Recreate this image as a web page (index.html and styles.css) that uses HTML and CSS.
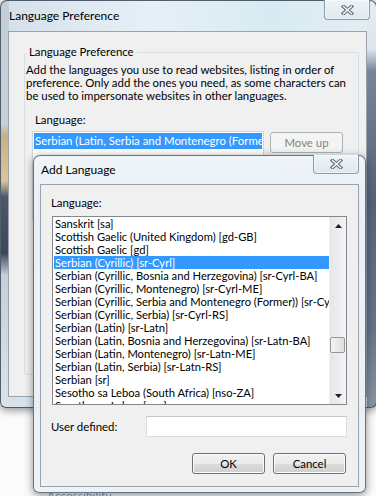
FILE: index.html
```html
<!DOCTYPE html>
<html lang="en">
<head>
  <meta charset="UTF-8">
  <title>Language Preference</title>
  <link rel="stylesheet" href="styles.css">
</head>
<body>
  <!-- link on the page behind the dialogs -->
  <a class="backdrop-link" href="#">Accessibility</a>

  <!-- Language Preference window -->
  <div class="window main-window">
    <div class="titlebar">
      <span class="title">Language Preference</span>
      <button class="close-btn" type="button">
        <svg width="13" height="10" viewBox="0 0 13 10">
          <path d="M2.5 1.5 L10.5 8.5 M10.5 1.5 L2.5 8.5" stroke="#5f656e" stroke-width="3.6" stroke-linecap="square"/>
          <path d="M2.5 1.5 L10.5 8.5 M10.5 1.5 L2.5 8.5" stroke="#f3f6f9" stroke-width="1.6" stroke-linecap="square"/>
        </svg>
      </button>
    </div>
    <div class="client">
      <fieldset class="group">
        <legend>Language Preference</legend>
        <p class="desc">Add the languages you use to read websites, listing in order of<br>preference. Only add the ones you need, as some characters can<br>be used to impersonate websites in other languages.</p>
        <div class="field-label">Language:</div>
        <div class="lang-row">
          <div class="pref-list">
            <div class="pref-item selected">Serbian (Latin, Serbia and Montenegro (Former)) [sr-Latn-CS]</div>
          </div>
          <div class="side-buttons">
            <button class="btn" type="button" disabled>Move up</button>
            <button class="btn" type="button" disabled>Move down</button>
          </div>
        </div>
      </fieldset>
    </div>
  </div>

  <!-- Add Language window -->
  <div class="window add-window">
    <div class="titlebar">
      <span class="title">Add Language</span>
      <button class="close-btn" type="button">
        <svg width="13" height="10" viewBox="0 0 13 10">
          <path d="M2.5 1.5 L10.5 8.5 M10.5 1.5 L2.5 8.5" stroke="#5f656e" stroke-width="3.6" stroke-linecap="square"/>
          <path d="M2.5 1.5 L10.5 8.5 M10.5 1.5 L2.5 8.5" stroke="#f3f6f9" stroke-width="1.6" stroke-linecap="square"/>
        </svg>
      </button>
    </div>
    <div class="client">
      <div class="field-label add-label">Language:</div>
      <div class="listbox">
        <div class="items">
          <div class="item">Sanskrit [sa]</div>
          <div class="item">Scottish Gaelic (United Kingdom) [gd-GB]</div>
          <div class="item">Scottish Gaelic [gd]</div>
          <div class="item selected">Serbian (Cyrillic) [sr-Cyrl]</div>
          <div class="item">Serbian (Cyrillic, Bosnia and Herzegovina) [sr-Cyrl-BA]</div>
          <div class="item">Serbian (Cyrillic, Montenegro) [sr-Cyrl-ME]</div>
          <div class="item">Serbian (Cyrillic, Serbia and Montenegro (Former)) [sr-Cyrl-CS]</div>
          <div class="item">Serbian (Cyrillic, Serbia) [sr-Cyrl-RS]</div>
          <div class="item">Serbian (Latin) [sr-Latn]</div>
          <div class="item">Serbian (Latin, Bosnia and Herzegovina) [sr-Latn-BA]</div>
          <div class="item">Serbian (Latin, Montenegro) [sr-Latn-ME]</div>
          <div class="item">Serbian (Latin, Serbia) [sr-Latn-RS]</div>
          <div class="item">Serbian [sr]</div>
          <div class="item">Sesotho sa Leboa (South Africa) [nso-ZA]</div>
          <div class="item">Sesotho sa Leboa [nso]</div>
        </div>
        <div class="scrollbar">
          <div class="arrow">
            <svg width="7" height="4" viewBox="0 0 7 4"><path d="M0 4 L3.5 0 L7 4 Z" fill="#222"/></svg>
          </div>
          <div class="thumb"></div>
          <div class="arrow arrow-down">
            <svg width="7" height="4" viewBox="0 0 7 4"><path d="M0 0 L7 0 L3.5 4 Z" fill="#222"/></svg>
          </div>
        </div>
      </div>
      <div class="user-row">
        <label class="user-label" for="userDefined">User defined:</label>
        <input class="textbox" type="text" id="userDefined">
      </div>
      <div class="dialog-buttons">
        <button class="btn" type="button">OK</button>
        <button class="btn" type="button">Cancel</button>
      </div>
    </div>
  </div>
</body>
</html>
```

FILE: styles.css
```css
/* Reset */
* {
  margin: 0;
  padding: 0;
  box-sizing: border-box;
}

body {
  position: relative;
  width: 376px;
  height: 496px;
  overflow: hidden;
  background: #fbfbfb;
  font-family: Lato, "Noto Sans", sans-serif;
  font-size: 11.4px;
  color: #000;
}

.backdrop-link {
  position: absolute;
  left: 47px;
  top: 488px;
  color: #7d9cc4;
  font-size: 12px;
  text-decoration: none;
  filter: blur(0.7px);
}

/* Windows */
.window {
  position: absolute;
  display: flex;
  flex-direction: column;
  border: 1px solid rgba(45, 58, 74, 0.8);
  border-radius: 7px 7px 6px 6px;
  box-shadow: 0 2px 9px rgba(0, 0, 0, 0.45);
}

.main-window {
  left: 0;
  top: 0;
  width: 377px;
  height: 408px;
  background:
    linear-gradient(to bottom, #c3ced8 0, #c6d1da 122px, #c9b186 134px, #dcc596 180px, #4a586c 196px, #3b485b 252px, #c5cfd9 274px, #dce3ea 100%) left top / 8px 100% no-repeat,
    linear-gradient(to bottom, #e4edf4 0, #dce6ee 48px, #76859a 70px, #55647a 200px, #66758a 330px, #8a95a3 100%) right top / 9px 100% no-repeat,
    linear-gradient(to right, #d4e0ea, #e6f0f6 40%, #d8ebf2 72%, #e4edf4);
}

.add-window {
  left: 33px;
  top: 155px;
  width: 333px;
  height: 338px;
  border-color: rgba(80, 92, 108, 0.85);
  background: linear-gradient(to bottom, rgba(240, 245, 249, 0.97), rgba(233, 239, 245, 0.97) 40px, rgba(236, 241, 246, 0.96));
}

.titlebar {
  display: flex;
  justify-content: space-between;
  align-items: flex-start;
  height: 30px;
  flex-shrink: 0;
}

.add-window .titlebar {
  height: 28px;
}

.title {
  padding-left: 8px;
  line-height: 30px;
  font-size: 12px;
}

.add-window .title {
  padding-left: 7px;
  line-height: 28px;
}

.close-btn {
  display: flex;
  justify-content: center;
  align-items: center;
  width: 46px;
  height: 20px;
  margin: -1px 6px 0 0;
  border: 1px solid #8e99a5;
  border-top: none;
  border-radius: 0 0 4px 4px;
  background: linear-gradient(to bottom, #eef4f8, #dfe8ef);
  box-shadow: inset 0 0 0 1px rgba(255, 255, 255, 0.55);
}

.add-window .close-btn {
  height: 19px;
}

.client {
  margin: 0 9px 0 7px;
  height: 366px;
  border: 1px solid #98a3ae;
  background: #f0f0f0;
}

.add-window .client {
  margin: 0 6px;
  height: 303px;
}

/* Group box */
.group {
  margin: 12px 7px 0 15px;
  height: 331px;
  padding: 3px 0 0 1px;
  border: 1px solid #d5dfe5;
  border-radius: 3px;
}

.group legend {
  padding: 0 3px;
  line-height: 16px;
}

.desc {
  line-height: 13px;
  white-space: nowrap;
}

.field-label {
  margin: 11px 0 0 9px;
  line-height: 13px;
}

.lang-row {
  display: flex;
  margin: 5px 0 0 6px;
}

.pref-list {
  width: 232px;
  height: 90px;
  padding: 1px;
  border: 1px solid #d3d6da;
  background: #fff;
  overflow: hidden;
}

.pref-item {
  height: 16px;
  padding-left: 1px;
  line-height: 16px;
  white-space: nowrap;
  overflow: hidden;
}

.selected {
  background: #3399ff;
  color: #fff;
}

.side-buttons {
  display: flex;
  flex-direction: column;
  gap: 6px;
  margin: 1px 0 0 6px;
}

/* Buttons */
.btn {
  width: 73px;
  height: 21px;
  border: 1px solid #707070;
  border-radius: 3px;
  background: linear-gradient(to bottom, #f2f2f2 0, #ebebeb 50%, #dddddd 50%, #cfcfcf 100%);
  box-shadow: inset 0 0 0 1px #fbfbfb;
  font-family: inherit;
  font-size: 11.4px;
  color: #000;
}

.btn:disabled {
  border-color: #adb2b5;
  background: #f4f4f4;
  box-shadow: none;
  color: #838383;
}

/* Add Language dialog */
.add-label {
  margin: 11px 0 0 10px;
}

.listbox {
  display: flex;
  width: 295px;
  height: 189px;
  margin: 7px 0 0 11px;
  border: 1px solid #828790;
  background: #fff;
}

.items {
  flex: 1;
  overflow: hidden;
}

.item {
  height: 13px;
  margin-left: 1px;
  padding-left: 1px;
  font-size: 11.2px;
  line-height: 13px;
  white-space: nowrap;
  overflow: hidden;
}

.scrollbar {
  display: flex;
  flex-direction: column;
  width: 17px;
  background: linear-gradient(to right, #e6e6e9, #f4f4f6);
  border-left: 1px solid #f0f0f0;
}

.arrow {
  display: flex;
  justify-content: center;
  align-items: center;
  height: 17px;
}

.arrow-down {
  margin-top: auto;
}

.thumb {
  width: 15px;
  height: 16px;
  margin: 103px 0 0 0;
  border: 1px solid #979797;
  border-radius: 2px;
  background: linear-gradient(to right, #f4f4f4, #dedede);
}

.user-row {
  display: flex;
  align-items: center;
  margin-top: 11px;
}

.user-label {
  width: 105px;
  padding-left: 10px;
  line-height: 13px;
}

.textbox {
  width: 201px;
  height: 21px;
  border: 1px solid #dadde2;
  border-top-color: #c3c7cd;
  background: #fff;
  outline: none;
}

.dialog-buttons {
  display: flex;
  justify-content: flex-end;
  gap: 8px;
  margin: 16px 12px 0 0;
}
```
